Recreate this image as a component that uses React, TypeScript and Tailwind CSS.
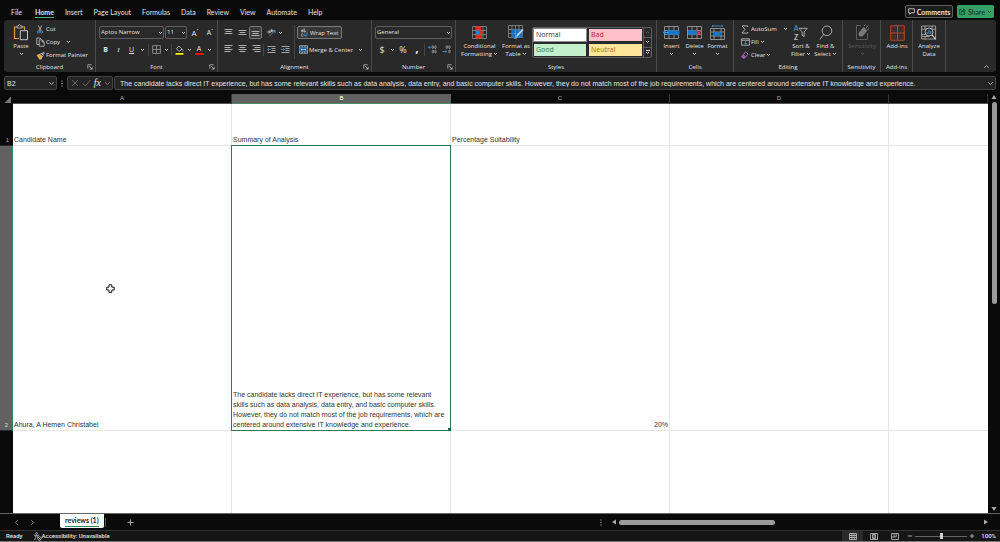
import React, { useState } from "react";

type Kids = { children?: React.ReactNode };

const SUMMARY =
  "The candidate lacks direct IT experience, but has some relevant skills such as data analysis, data entry, and basic computer skills. However, they do not match most of the job requirements, which are centered around extensive IT knowledge and experience.";

/* ---------- icons ---------- */

function Svg({ w, h, children, className = "" }: Kids & { w: number; h: number; className?: string }) {
  return (
    <svg width={w} height={h} viewBox={`0 0 ${w} ${h}`} fill="none" stroke="#c4c4c4" strokeWidth="0.8" className={`shrink-0 ${className}`} aria-hidden="true">
      {children}
    </svg>
  );
}

const Caret = () => (
  <Svg w={5} h={4}>
    <path d="M1 1l1.5 1.5L4 1" stroke="#dcdcdc" strokeWidth="0.9" />
  </Svg>
);

const Chevron = ({ dim = false }: { dim?: boolean }) => (
  <Svg w={7} h={5}>
    <path d="M1.2 1.2l2.3 2.3 2.3-2.3" stroke={dim ? "#8a8a8a" : "#c8c8c8"} />
  </Svg>
);

const PasteIcon = () => (
  <Svg w={16} h={17}>
    <path d="M6 14.5H1.5V3H4M9 3h2.5v3" stroke="#e0a243" strokeWidth="1.2" />
    <path d="M4 4V2h1.3a1.2 1.2 0 012.4 0H9v2z" />
    <path d="M7.3 6.7h7.2v9H7.3z" fill="#292929" strokeWidth="1" />
  </Svg>
);

const CutIcon = () => (
  <Svg w={8} h={9}>
    <path d="M2.3 .5l2.6 5.3M5.7 .5L3.1 5.8" />
    <circle cx="2.4" cy="7" r="1.1" stroke="#4da0dc" />
    <circle cx="5.6" cy="7" r="1.1" stroke="#4da0dc" />
  </Svg>
);

const CopyIcon = () => (
  <Svg w={9} h={10}>
    <path d="M3 7.5H.8V1H4l1 1" />
    <path d="M3.2 2.8h2.9l2 2v4.4H3.2zM6 2.8v2.1h2" />
  </Svg>
);

const PainterIcon = () => (
  <Svg w={9} h={9}>
    <path d="M1 4.2l3-1 2.3 2.4-1 2.4-1.6.4z" fill="#e3a54b" stroke="#f0c27c" strokeWidth=".6" />
    <path d="M4 3.2l1-1 2.4 2.3-1.1 1M6 3l1.4-1.8.9.7L7 3.8" stroke="#e0e0e0" />
  </Svg>
);

const Launcher = () => (
  <button type="button" aria-label="More options" className="flex w-[8px] items-center">
    <Svg w={6} h={6}>
      <path d="M.8 4.6V.8h3.8M2.3 2.3l2.8 2.8M5.1 2.7v2.4H2.7" stroke="#d0d0d0" strokeWidth="0.7" />
    </Svg>
  </button>
);

const BordersIcon = () => (
  <Svg w={9} h={9}>
    <path d="M.6.6h7.8v7.8H.6zM4.5.6v7.8M.6 4.5h7.8" stroke="#9a9a9a" />
  </Svg>
);

const FillColorIcon = () => (
  <Svg w={9} h={10}>
    <path d="M3.8 1L7 4.1 4.2 6.4 1.3 3.8zM7.4 4.3c.7.8.9 1.5.3 2" />
    <path d="M.5 8h8v1.8h-8z" fill="#fff200" stroke="none" />
  </Svg>
);

const FontColorIcon = () => (
  <span className="flex w-[9px] flex-col items-center">
    <span className="text-[7px] leading-[8px]">A</span>
    <span className="h-[2px] w-full bg-[#f00f0f]" />
  </span>
);

const Lines = ({ rows }: { rows: [number, number, number][] }) => (
  <Svg w={9} h={9}>
    {rows.map(([x, y, len]) => (
      <path key={y} d={`M${x} ${y + 0.5}h${len}`} stroke="#bdbdbd" strokeWidth="0.9" />
    ))}
  </Svg>
);

const OrientationIcon = () => (
  <Svg w={9} h={9}>
    <path d="M2.6 8L8 2.6M8 5V2.6H5.6" stroke="#4da0dc" />
    <circle cx="1.9" cy="4" r="1.1" />
    <path d="M3.1 2.5V5.2M4.3.8v3.2" />
    <circle cx="5.2" cy="3" r=".9" />
  </Svg>
);

const IndentIcon = ({ right = false }: { right?: boolean }) => (
  <Svg w={9} h={9}>
    <path d="M.5 1.5h8M4.5 3.5h4M4.5 5.5h4M.5 7.5h8" />
    <path d={right ? "M.3 4.5h3.2M2.3 3.2l1.3 1.3-1.3 1.3" : "M.5 4.5h3.2M1.8 3.2L.5 4.5l1.3 1.3"} stroke="#3f9ae0" />
  </Svg>
);

const WrapIcon = () => (
  <Svg w={8} h={10}>
    <path d="M2.9 1.4v2.8M2.900 3.4a.9.8 0 10-1.600 0 .9.8 0 001.600 0M4.200 .4v3.800M4.200 3.200c1.800-1 2 1.400 0 .9M1.400 6.200c.8-.9 1.800-.2 1.800.4M3.200 7.800c-1.600 1.200-2.600-.6-1.200-1.500" />
    <path d="M7 3.500v3.900H4.200M5.500 6L4.100 7.400l1.400 1.400" stroke="#3f9ae0" />
  </Svg>
);

const MergeIcon = () => (
  <Svg w={9} h={9}>
    <path d="M.5.8h8v7.4h-8zM3.2.8v1.7M5.9.8v1.7M3.2 6.5v1.7M5.9 6.5v1.7" />
    <path d="M.5 2.6h8v3.8h-8z" fill="#1d5c93" stroke="#3f9ae0" strokeWidth=".6" />
    <path d="M2 4.5h5M3 3.7l-1 .8 1 .8M6 3.7l1 .8-1 .8" stroke="#d9ebfa" strokeWidth=".6" />
  </Svg>
);

const DecimalIcon = ({ less = false }: { less?: boolean }) => (
  <Svg w={9} h={9}>
    <rect x="4.2" y=".7" width="1.3" height="2.8" rx=".6" strokeWidth=".6" />
    <rect x="6.8" y=".7" width="1.3" height="2.8" rx=".6" strokeWidth=".6" />
    <rect x="6.8" y="5.2" width="1.3" height="2.8" rx=".6" strokeWidth=".6" />
    {less ? (
      <path d="M.5 6.5h4.3M3.4 5.2l1.4 1.3-1.4 1.3" stroke="#3f9ae0" />
    ) : (
      <>
        <rect x="4.2" y="5.2" width="1.3" height="2.8" rx=".6" strokeWidth=".6" />
        <path d="M.5 2.3h3M1.8 1L.5 2.3l1.3 1.3" stroke="#3f9ae0" />
      </>
    )}
  </Svg>
);

const GRID_LINES = "M.5 .5h14v12H.5zM.5 4.5h14M.5 8.5h14M4 .5v12M7.5 .5v12M11 .5v12";

const ConditionalIcon = () => (
  <Svg w={15} h={13}>
    <path d={GRID_LINES} stroke="#9a9a9a" strokeWidth="0.7" />
    <path d="M4 .6h5v3.6H4zM4 8.8h6v3.6H4z" fill="#e8291c" stroke="none" />
    <path d="M4 4.8h3v3.4H4z" fill="#1e88d8" stroke="none" />
    <path d="M7 4.8h3.5v3.4H7z" fill="#e8291c" stroke="none" />
  </Svg>
);

const FormatTableIcon = () => (
  <Svg w={16} h={15}>
    <path d={GRID_LINES} stroke="#9a9a9a" strokeWidth="0.7" />
    <path d="M4.2 4.6h10.4v7.8H4.2z" fill="#1272c4" stroke="none" />
    <path d="M4 8.5h10.5M7.5 4.5v8M11 4.5v8" stroke="#5aa9e6" strokeWidth=".5" />
    <path d="M15 4.5L8.8 11" stroke="#d8d8d8" strokeWidth="1.6" />
    <path d="M8.8 10.4c-1.6 0-1.6 2.6-3.4 3.1 2 .8 4.4 0 4.4-2z" fill="#59a9e8" stroke="none" />
  </Svg>
);

const InsertIcon = () => (
  <Svg w={17} h={13}>
    <path d="M1.5 .5h14v12h-14zM1.5 4.5h14M1.5 8.5h14M6 .5v12M11 .5v12" stroke="#a5a5a5" strokeWidth="0.8" />
    <path d="M4 4.2h12.5v4.6H4z" fill="#1677ca" stroke="none" />
    <path d="M.6 6.5h5M3 4.2L.6 6.5 3 8.8" stroke="#3f9ae0" strokeWidth="1.1" />
  </Svg>
);

const DeleteIcon = () => (
  <Svg w={17} h={13}>
    <path d="M1.5 .5h14v12h-14zM1.5 4.5h14M1.5 8.5h14M6 .5v12M11 .5v12" stroke="#a5a5a5" strokeWidth="0.8" />
    <path d="M2 4.2h9v4.6H2z" fill="#1677ca" stroke="none" />
    <path d="M10.5 4.3l5 5M15.5 4.3l-5 5" stroke="#e0364a" strokeWidth="1.1" />
  </Svg>
);

const FormatIcon = () => (
  <Svg w={17} h={16}>
    <path d="M3.5 1h10M3.5 0v2M13.5 0v2" stroke="#3f9ae0" />
    <path d="M1.5 3.5h14v11h-14zM1.5 7h14M1.5 11h14M5 3.5v11M12 3.5v11" stroke="#a5a5a5" />
    <path d="M5 7h7v4H5z" fill="#1677ca" stroke="none" />
  </Svg>
);

const SumIcon = () => (
  <Svg w={8} h={9}>
    <path d="M6.8 2V.9H1l3 3.5-3 3.7h5.8V7" stroke="#d0d0d0" />
  </Svg>
);

const FillDownIcon = () => (
  <Svg w={9} h={8}>
    <path d="M.6.8h7.8v6.4H.6zM.6 2.3h7.8" />
    <path d="M4.5 3v3.2M3.2 5l1.3 1.3L5.8 5" stroke="#3f9ae0" />
  </Svg>
);

const ClearIcon = () => (
  <Svg w={8} h={8}>
    <path d="M4.6.8l2.6 2.3-3.7 4.1H2.2L.8 5.6z" stroke="#c77ad8" />
    <path d="M.9 5.5l1.8-2 2.4 2.2-1.5 1.5H2.2z" fill="#a44fb8" stroke="none" />
  </Svg>
);

const SortIcon = () => (
  <span className="flex h-[18px] items-center">
    <span className="flex flex-col font-[Lato,sans-serif] text-[7px] font-normal leading-[9px]">
      <span className="text-[#4da0dc]">A</span>
      <span>Z</span>
    </span>
    <Svg w={10} h={11}>
      <path d="M1 1.3h8.2L6.2 5v4.6L4.2 8.3V5z" stroke="#c8c8c8" />
    </Svg>
  </span>
);

const FindIcon = () => (
  <Svg w={14} h={16}>
    <circle cx="8" cy="5.8" r="4.8" stroke="#c8c8c8" />
    <path d="M4.8 9.2L.8 14.6" stroke="#c8c8c8" />
  </Svg>
);

const SensitivityIcon = () => (
  <Svg w={15} h={17}>
    <path d="M6 1.5H1.5v14h11V9" stroke="#6a6a6a" />
    <path d="M4 9l4.6-5.4 3.2 2.8L7.4 12H4.6z" fill="#777" stroke="#8a8a8a" />
    <path d="M9 2l1.3-1.4M11 4l2.4-2.7M12.6 5.8l1.5-1.4" stroke="#8a8a8a" strokeWidth="1" />
  </Svg>
);

const AddInsIcon = () => (
  <Svg w={15} h={16}>
    <path d="M.8 .8h13.4v14.4H.8zM7.5 .8v14.4M.8 8h13.4" stroke="#c24a24" strokeWidth="1" />
    <path d="M2.7 2.8h3v3.2h-3zM9.3 2.8h3v3.2h-3zM2.7 10h3v3.2h-3zM9.3 10h3v3.2h-3z" stroke="#8e351b" strokeWidth=".6" />
  </Svg>
);

const AnalyzeIcon = () => (
  <Svg w={16} h={16}>
    <path d="M.6 1h14v13H.6zM.6 4.2h14M.6 9.5h4M4 1v3M11 1v3M4 11v3M.6 11.5h8" stroke="#b5b5b5" />
    <circle cx="8" cy="7" r="4" fill="#292929" stroke="#d6d6d6" />
    <path d="M10.9 9.9l4 4.6" stroke="#d6d6d6" strokeWidth="1.1" />
    <path d="M6.2 9V7M8 9V4.8M9.8 9V6" stroke="#3f9ae0" strokeWidth="1" />
  </Svg>
);

/* ---------- ribbon parts ---------- */

const Rule = ({ tall = false }: { tall?: boolean }) => (
  <span className={`w-px shrink-0 bg-[#454545] ${tall ? "h-[34px]" : "h-[12px]"}`} />
);

function Group({ label, width, launcher = false, children }: Kids & { label: string; width: string; launcher?: boolean }) {
  return (
    <section aria-label={label || undefined} className={`flex shrink-0 flex-col border-r border-[#4a4a4a] ${width}`}>
      <div className="flex h-[42px] items-center px-[3px] pt-[2px]">{children}</div>
      <div className={`flex h-[10px] items-center ${launcher ? "pl-[8px]" : ""}`}>
        <span className="flex-1 text-center leading-[10px]">{label}</span>
        {launcher && <Launcher />}
      </div>
    </section>
  );
}

function IconButton({ label, width = "w-[14px]", on = false, children }: Kids & { label: string; width?: string; on?: boolean }) {
  return (
    <button type="button" aria-label={label} title={label} className={`flex h-[13px] shrink-0 items-center justify-center ${width} ${on ? "rounded-[2px] border border-[#7a7a7a] bg-[#3a3a3a]" : ""}`}>
      {children}
    </button>
  );
}

function SmallButton({ icon, label, caret = false }: { icon: React.ReactNode; label: string; caret?: boolean }) {
  return (
    <button type="button" className="flex h-[13px] items-center gap-px whitespace-nowrap">
      <span className="flex w-[10px] justify-center">{icon}</span>
      <span>{label}</span>
      {caret && <Caret />}
    </button>
  );
}

function BigButton({ icon, lines, width, caret = false, below = false, dim = false }: { icon: React.ReactNode; lines: string[]; width: string; caret?: boolean; below?: boolean; dim?: boolean }) {
  return (
    <button type="button" disabled={dim} className={`flex h-[38px] shrink-0 flex-col items-center whitespace-nowrap leading-[8px] ${width} ${dim ? "text-[#5c5c5c]" : ""}`}>
      <span className="flex h-[19px] items-center">{icon}</span>
      {lines.map((line, i) => (
        <span key={line} className="flex items-center gap-px">
          {line}
          {caret && i === lines.length - 1 && <Caret />}
        </span>
      ))}
      {below && (
        <span className={`flex h-[8px] items-center ${dim ? "opacity-30" : ""}`}>
          <Caret />
        </span>
      )}
    </button>
  );
}

function DropDown({ label, value, options, width }: { label: string; value: string; options: string[]; width: string }) {
  return (
    <span className={`grid shrink-0 items-center ${width}`}>
      <select aria-label={label} defaultValue={value} className="col-start-1 row-start-1 h-[13px] w-full appearance-none rounded-[2px] border border-[#5e5e5e] bg-[#292929] px-px text-[6px] leading-[11px] text-[#e2e2e2]">
        {options.map((o) => (
          <option key={o}>{o}</option>
        ))}
      </select>
      <span className="pointer-events-none col-start-1 row-start-1 mr-px justify-self-end">
        <Caret />
      </span>
    </span>
  );
}

const STYLES = [
  { name: "Normal", look: "bg-white text-[#333] outline outline-[#8a8a8a]" },
  { name: "Bad", look: "bg-[#ffc0cb] text-[#b3243c]" },
  { name: "Good", look: "bg-[#c3f0cc] text-[#2d7a38]" },
  { name: "Neutral", look: "bg-[#ffe699] text-[#a8701c]" },
];

function Ribbon() {
  return (
    <div className="mx-1 flex h-[52px] shrink-0 overflow-hidden rounded-[3px] bg-[#292929] font-['Open_Sans','Noto_Sans',sans-serif] text-[6px] font-medium">
      <Group label="Clipboard" width="w-[92px]" launcher>
        <BigButton icon={<PasteIcon />} lines={["Paste"]} width="w-[28px]" below />
        <div className="flex flex-col">
          <SmallButton icon={<CutIcon />} label="Cut" />
          <span className="flex gap-[5px]">
            <SmallButton icon={<CopyIcon />} label="Copy" />
            <IconButton label="Copy options" width="w-[6px]"><Caret /></IconButton>
          </span>
          <SmallButton icon={<PainterIcon />} label="Format Painter" />
        </div>
      </Group>

      <Group label="Font" width="w-[122px]" launcher>
        <div className="mb-[2px] flex flex-col gap-1">
          <div className="flex items-center gap-px">
            <DropDown label="Font name" value="Aptos Narrow" options={["Aptos Narrow", "Arial", "Calibri"]} width="w-[65px]" />
            <DropDown label="Font size" value="11" options={["10", "11", "12", "14"]} width="w-[22px]" />
            <IconButton label="Increase font size"><span className="text-[8px]">A</span><span className="-mt-1 text-[5px]">ˆ</span></IconButton>
            <IconButton label="Decrease font size"><span className="text-[7px]">A</span><span className="-mt-1 text-[5px]">ˇ</span></IconButton>
          </div>
          <div className="flex items-center text-[7px]">
            <IconButton label="Bold" width="w-[13px]"><b>B</b></IconButton>
            <IconButton label="Italic" width="w-[13px]"><i className="font-['Liberation_Serif',serif]">I</i></IconButton>
            <IconButton label="Underline" width="w-[13px]"><u>U</u></IconButton>
            <IconButton label="Underline options" width="w-[8px]"><Caret /></IconButton>
            <span className="ml-[2px]" />
            <Rule />
            <IconButton label="Borders"><BordersIcon /></IconButton>
            <IconButton label="Border options" width="w-[6px]"><Caret /></IconButton>
            <span className="ml-[2px]" />
            <Rule />
            <IconButton label="Fill color"><FillColorIcon /></IconButton>
            <IconButton label="Fill color options" width="w-[6px]"><Caret /></IconButton>
            <IconButton label="Font color"><FontColorIcon /></IconButton>
            <IconButton label="Font color options" width="w-[6px]"><Caret /></IconButton>
          </div>
        </div>
      </Group>

      <Group label="Alignment" width="w-[154px]" launcher>
        <div className="mb-[2px] flex w-[73px] flex-col gap-1">
          <div className="flex items-center">
            <IconButton label="Top align"><Lines rows={[[0.5, 1, 8], [1.5, 3, 6], [0.5, 5, 8]]} /></IconButton>
            <IconButton label="Middle align"><Lines rows={[[0.5, 2, 8], [1.5, 4, 6], [0.5, 6, 8]]} /></IconButton>
            <IconButton label="Bottom align" width="w-[13px]" on><Lines rows={[[0.5, 3, 8], [1.5, 5, 6], [0.5, 7, 8]]} /></IconButton>
            <span className="ml-[3px]" />
            <IconButton label="Orientation" width="w-[12px]"><OrientationIcon /></IconButton>
            <IconButton label="Orientation options" width="w-[6px]"><Caret /></IconButton>
          </div>
          <div className="flex items-center">
            <IconButton label="Align left"><Lines rows={[[0.5, 0, 8], [0.5, 2, 6], [0.5, 4, 8], [0.5, 6, 6]]} /></IconButton>
            <IconButton label="Center"><Lines rows={[[0.5, 0, 8], [1.5, 2, 6], [0.5, 4, 8], [1.5, 6, 6]]} /></IconButton>
            <IconButton label="Align right"><Lines rows={[[0.5, 0, 8], [2.5, 2, 6], [0.5, 4, 8], [2.5, 6, 6]]} /></IconButton>
            <Rule />
            <IconButton label="Decrease indent"><IndentIcon /></IconButton>
            <IconButton label="Increase indent"><IndentIcon right /></IconButton>
          </div>
        </div>
        <Rule tall />
        <div className="mb-[2px] ml-[2px] flex flex-col gap-1">
          <button type="button" aria-pressed="true" className="flex h-[13px] w-[45px] items-center gap-[2px] whitespace-nowrap rounded-[2px] border border-[#7a7a7a] bg-[#363636] px-[2px]">
            <WrapIcon />
            Wrap Text
          </button>
          <span className="flex items-center gap-1 pl-px">
            <SmallButton icon={<MergeIcon />} label="Merge & Center" />
            <IconButton label="Merge options" width="w-[6px]"><Caret /></IconButton>
          </span>
        </div>
      </Group>

      <Group label="Number" width="w-[84px]" launcher>
        <div className="mb-[2px] flex flex-col gap-1">
          <DropDown label="Number format" value="General" options={["General", "Number", "Currency", "Percentage"]} width="w-[77px]" />
          <div className="flex items-center font-normal">
            <IconButton label="Accounting format"><span className="text-[9px]">$</span></IconButton>
            <IconButton label="Accounting options" width="w-[7px]"><Caret /></IconButton>
            <IconButton label="Percent style"><span className="text-[9px]">%</span></IconButton>
            <IconButton label="Comma style"><span className="-mt-1 text-[12px] font-bold">,</span></IconButton>
            <Rule />
            <IconButton label="Increase decimal"><DecimalIcon /></IconButton>
            <IconButton label="Decrease decimal"><DecimalIcon less /></IconButton>
          </div>
        </div>
      </Group>

      <Group label="Styles" width="w-[201px]">
        <BigButton icon={<ConditionalIcon />} lines={["Conditional", "Formatting"]} width="w-[41px]" caret />
        <BigButton icon={<FormatTableIcon />} lines={["Format as", "Table"]} width="w-[32px]" caret />
        <div className="flex rounded-[2px] border border-[#5e5e5e]">
          <div className="grid grid-cols-[52px_53px] gap-[3px] p-px">
            {STYLES.map((s) => (
              <button key={s.name} type="button" className={`h-[12px] px-[2px] text-left text-[7px] font-normal leading-[12px] ${s.look}`}>
                {s.name}
              </button>
            ))}
          </div>
          <div className="flex w-[8px] flex-col divide-y divide-[#5e5e5e] border-l border-[#5e5e5e]">
            {["Previous styles", "Next styles", "All styles"].map((l, i) => (
              <button key={l} type="button" aria-label={l} className="flex flex-1 flex-col items-center justify-center">
                {i === 2 && <span className="h-px w-[4px] bg-[#dcdcdc]" />}
                <span className={i === 0 ? "rotate-180 opacity-30" : ""}><Caret /></span>
              </button>
            ))}
          </div>
        </div>
      </Group>

      <Group label="Cells" width="w-[77px]">
        <BigButton icon={<InsertIcon />} lines={["Insert"]} width="w-[23px]" below />
        <BigButton icon={<DeleteIcon />} lines={["Delete"]} width="w-[23px]" below />
        <BigButton icon={<FormatIcon />} lines={["Format"]} width="w-[23px]" below />
      </Group>

      <Group label="Editing" width="w-[109px]">
        <div className="ml-[3px] flex w-[48px] flex-col">
          <span className="flex justify-between">
            <SmallButton icon={<SumIcon />} label="AutoSum" />
            <IconButton label="AutoSum options" width="w-[6px]"><Caret /></IconButton>
          </span>
          <SmallButton icon={<FillDownIcon />} label="Fill" caret />
          <SmallButton icon={<ClearIcon />} label="Clear" caret />
        </div>
        <BigButton icon={<SortIcon />} lines={["Sort &", "Filter"]} width="w-[26px]" caret />
        <BigButton icon={<FindIcon />} lines={["Find &", "Select"]} width="w-[23px]" caret />
      </Group>

      <Group label="Sensitivity" width="w-[38px]">
        <BigButton icon={<SensitivityIcon />} lines={["Sensitivity"]} width="w-[32px]" below dim />
      </Group>
      <Group label="Add-ins" width="w-[32px]">
        <BigButton icon={<AddInsIcon />} lines={["Add-ins"]} width="w-[26px]" />
      </Group>
      <Group label="" width="w-[33px]">
        <BigButton icon={<AnalyzeIcon />} lines={["Analyze", "Data"]} width="w-[26px]" />
      </Group>
      <button type="button" aria-label="Collapse ribbon" className="mb-[3px] ml-auto mr-[6px] rotate-180 self-end">
        <Chevron />
      </button>
    </div>
  );
}

/* ---------- window parts ---------- */

const TABS = ["File", "Home", "Insert", "Page Layout", "Formulas", "Data", "Review", "View", "Automate", "Help"];

function TabBar() {
  return (
    <header className="flex h-[20px] shrink-0 items-end justify-between pl-[11px] pr-[6px] font-[Lato,sans-serif]">
      <nav className="flex items-end gap-[11px]">
        {TABS.map((t, i) => (
          <a key={t} href="#ribbon" className={`flex h-[13px] flex-col items-center leading-[10px] ${t === "Home" ? "font-bold" : ""} ${i === 1 ? "ml-[2px]" : ""}`}>
            {t}
            {t === "Home" && <span className="h-px w-full bg-[#4fb37a]" />}
          </a>
        ))}
      </nav>
      <div className="mb-[2px] flex gap-1">
        <button type="button" className="flex h-[13px] w-[48px] items-center justify-center gap-[2px] rounded-[2px] border border-[#5e5e5e] bg-[#1c1c1c] font-bold">
          <Svg w={7} h={7}>
            <path d="M.6.8h5.8v4H3.2L1.8 6.3V4.8H.6z" stroke="#e0e0e0" />
          </Svg>
          Comments
        </button>
        <button type="button" className="flex h-[13px] w-[37px] items-center justify-center gap-[2px] rounded-[2px] bg-[#35a265] text-[#0d2d1b]">
          <Svg w={7} h={7}>
            <path d="M2.5 1.5H.7v4.8h5V4.6M2.3 4.2c.2-1.4 1-2 2.4-2V1l1.8 1.8-1.8 1.8V3.4c-1 0-1.8.2-2.4.8z" stroke="#0d2d1b" strokeWidth=".7" />
          </Svg>
          Share
          <Svg w={5} h={4}>
            <path d="M1 1l1.5 1.5L4 1" stroke="#0d2d1b" />
          </Svg>
        </button>
      </div>
    </header>
  );
}

function FormulaBar() {
  return (
    <div className="mx-1 mt-1 flex h-[14px] shrink-0 items-stretch">
      <span className="grid w-[53px] items-center">
        <input aria-label="Name box" defaultValue="B2" className="col-start-1 row-start-1 h-[14px] w-full rounded-[2px] border border-[#444] bg-[#242424] px-[2px] font-['Liberation_Sans',sans-serif] text-[7px]" />
        <span className="col-start-1 row-start-1 mr-[2px] justify-self-end"><Chevron /></span>
      </span>
      <span className="flex w-[10px] items-center justify-center">
        <Svg w={2} h={7}>
          <path d="M1 .5v1M1 3v1M1 5.5v1" stroke="#ccc" strokeWidth="1" />
        </Svg>
      </span>
      <div className="flex w-[46px] items-center justify-between rounded-[2px] border border-[#444] bg-[#242424] pl-[3px] pr-px">
        <button type="button" aria-label="Cancel">
          <Svg w={8} h={8}><path d="M1 1l6 6M7 1L1 7" stroke="#777" /></Svg>
        </button>
        <button type="button" aria-label="Enter">
          <Svg w={9} h={8}><path d="M.8 4.2L3.3 7l5-6" stroke="#777" /></Svg>
        </button>
        <button type="button" aria-label="Insert function" className="font-['Liberation_Serif',serif] text-[10px] italic leading-[10px]">fx</button>
        <Chevron dim />
      </div>
      <span className="ml-px grid min-w-0 flex-1 items-center">
        <input aria-label="Formula bar" defaultValue={SUMMARY} className="col-start-1 row-start-1 h-[14px] w-full rounded-[2px] border border-[#444] bg-[#242424] pl-[5px] pr-4 font-['Liberation_Sans',sans-serif] text-[7px]" />
        <span className="col-start-1 row-start-1 mr-[2px] justify-self-end"><Chevron /></span>
      </span>
    </div>
  );
}

function Sheet() {
  const cell = "border-b border-r border-[#e6e6e6] pl-px align-bottom leading-[10px] last:border-r-0";
  const side = "border-b border-[#2a2a2a] pr-1 text-right align-bottom text-[6px] font-normal leading-[9px]";
  return (
    <table className="h-full w-full table-fixed border-separate border-spacing-0 bg-white font-['Liberation_Sans',sans-serif] text-[7px] text-[#333]">
      <colgroup>
        <col className="w-[13px]" />
        <col className="w-[219px]" />
        <col className="w-[219px]" />
        <col className="w-[219px]" />
        <col className="w-[219px]" />
        <col />
      </colgroup>
      <thead>
        <tr className="h-[10px] bg-[#0a0a0a] text-[6px] leading-[9px] text-[#b0b0b0]">
          <td className="p-0">
            <Svg w={12} h={9}><path d="M11 1.5V8H4.5z" fill="#777" stroke="none" /></Svg>
          </td>
          {["A", "B", "C", "D", ""].map((c) => (
            <th key={c} scope="col" className={`p-0 font-normal ${c === "B" ? "border-b border-[#4f8a6c] bg-[#616161] text-white" : "border-b border-r border-b-[#555] border-r-[#333]"}`}>
              {c}
            </th>
          ))}
        </tr>
      </thead>
      <tbody>
        <tr className="h-[42px]">
          <th scope="row" className={`${side} bg-[#0a0a0a] text-[#aaa]`}>1</th>
          <td className={cell}>Candidate Name</td>
          <td className={cell}>Summary of Analysis</td>
          <td className={cell}>Percentage Suitability</td>
          <td className={cell} />
          <td className={cell} />
        </tr>
        <tr className="h-[285px]">
          <th scope="row" className={`${side} border-r border-r-[#2f8a5b] bg-[#616161] text-[#ddd]`}>2</th>
          <td className={cell}>Ahura, A Hemen Christabel</td>
          <td className={`${cell} relative pr-1`}>
            {SUMMARY}
            <span className="pointer-events-none absolute -inset-px border border-[#2f7a55]" />
            <span className="absolute -bottom-px -right-px size-[3px] bg-[#1f6b45]" />
          </td>
          <td className={`${cell} pr-px text-right`}>20%</td>
          <td className={cell} />
          <td className={cell} />
        </tr>
        <tr>
          <th scope="row" className="bg-[#0a0a0a]" aria-label="3" />
          {[0, 1, 2, 3, 4].map((i) => (
            <td key={i} className="border-r border-[#e6e6e6] last:border-r-0" />
          ))}
        </tr>
      </tbody>
    </table>
  );
}

const Arrow = ({ turn = "" }: { turn?: string }) => (
  <Svg w={6} h={6} className={turn}>
    <path d="M.5 5L3 1l2.5 4z" fill="#a8a8a8" stroke="none" />
  </Svg>
);

function SheetTabs() {
  return (
    <div className="flex h-[17px] shrink-0 items-center border-t border-[#666] bg-[#0a0a0a]">
      <div className="flex w-[60px] gap-[11px] pl-[14px]">
        <button type="button" aria-label="Previous sheet"><Svg w={5} h={7}><path d="M3.8 1L1.3 3.5 3.8 6" stroke="#8c8c8c" /></Svg></button>
        <button type="button" aria-label="Next sheet"><Svg w={5} h={7}><path d="M1.2 1l2.5 2.5L1.2 6" stroke="#8c8c8c" /></Svg></button>
      </div>
      <button type="button" className="flex h-[14px] flex-col items-center self-start rounded-b-[2px] bg-white px-[5px] font-[Lato,sans-serif] text-[7px] font-bold leading-[12px] text-[#222]">
        reviews (1)
        <span className="h-px w-full bg-[#2f8a5b]" />
      </button>
      <span className="ml-px h-[9px] w-px bg-[#555]" />
      <button type="button" aria-label="New sheet" className="ml-[21px]">
        <Svg w={7} h={7}><path d="M3.5 .5v6M.5 3.5h6" stroke="#c4c4c4" /></Svg>
      </button>
      <div className="ml-auto flex w-2/5 items-center gap-[2px] pr-[11px]">
        <Svg w={2} h={7}><path d="M1 .5v1M1 3v1M1 5.5v1" stroke="#ccc" strokeWidth="1" /></Svg>
        <span className="ml-[7px] flex"><Arrow turn="-rotate-90" /></span>
        <div className="flex-1">
          <div className="h-[5px] w-[43%] rounded-full bg-[#9b9b9b]" />
        </div>
        <Arrow turn="rotate-90" />
      </div>
    </div>
  );
}

function StatusBar() {
  const [zoom, setZoom] = useState(100);
  return (
    <footer className="flex h-[12px] shrink-0 items-center border-b border-t border-b-[#777] border-t-[#333] bg-[#151515] pl-[6px] pr-1 font-[Roboto,sans-serif] text-[6px] font-medium">
      <span>Ready</span>
      <span className="ml-[10px] flex items-center">
        <Svg w={9} h={9}>
          <circle cx="3.5" cy="1.5" r=".9" />
          <path d="M.8 3l1.8.6v1.8L1.6 8M6.2 3l-1.8.6v1.6L5 6M2.6 3.6h1.8" />
          <circle cx="6.5" cy="6.5" r="1.7" />
          <path d="M5.5 5.5l2 2" />
        </Svg>
        Accessibility: Unavailable
      </span>
      <div className="ml-auto flex items-center">
        <button type="button" aria-label="Normal view" className="flex h-[10px] w-[21px] items-center justify-center bg-[#2a2a2a]">
          <Svg w={8} h={7}><path d="M.5.5h7v6h-7zM.5 2.5h7M.5 4.5h7M2.8 .5v6M5.2 .5v6" /></Svg>
        </button>
        <button type="button" aria-label="Page layout view" className="flex w-[21px] justify-center">
          <Svg w={8} h={7}><path d="M.5.5h7v6h-7zM2.5 1.5h3v4h-3zM3 2.8h2M3 4.2h2" /></Svg>
        </button>
        <button type="button" aria-label="Page break view" className="flex w-[21px] justify-center">
          <Svg w={8} h={7}><path d="M.5.5h7v6h-7zM3 .5v3.5M5.2 .5v3.5M.5 4h4.7" /></Svg>
        </button>
        <button type="button" aria-label="Zoom out" className="ml-[2px]"><Svg w={6} h={6}><path d="M.8 3h4.4" /></Svg></button>
        <input
          type="range"
          aria-label="Zoom"
          min={10}
          max={190}
          value={zoom}
          onChange={(e) => setZoom(Number(e.target.value))}
          className="mx-[2px] h-[6px] w-[52px] appearance-none bg-[linear-gradient(#666,#666)] bg-[length:100%_1px] bg-center bg-no-repeat [&::-webkit-slider-thumb]:h-[6px] [&::-webkit-slider-thumb]:w-[3px] [&::-webkit-slider-thumb]:appearance-none [&::-webkit-slider-thumb]:bg-[#d0d0d0]"
        />
        <button type="button" aria-label="Zoom in"><Svg w={6} h={6}><path d="M.8 3h4.4M3 .8v4.4" /></Svg></button>
        <span className="ml-[6px]">{zoom}%</span>
      </div>
    </footer>
  );
}

export default function App() {
  return (
    <div className="flex h-screen flex-col overflow-hidden bg-[#0a0a0a] font-['Open_Sans','Noto_Sans',sans-serif] text-[7px] leading-[10px] text-[#e2e2e2]">
      <TabBar />
      <Ribbon />
      <FormulaBar />
      <main className="relative mt-1 flex min-h-0 flex-1">
        <div className="min-w-0 flex-1">
          <Sheet />
        </div>
        <div className="flex w-[12px] shrink-0 flex-col items-center pb-px">
          <Arrow />
          <div className="min-h-0 flex-1 pt-[2px]">
            <div className="h-1/2 w-[5px] rounded-full bg-[#9b9b9b]" />
          </div>
          <Arrow turn="rotate-180" />
        </div>
        <svg className="absolute left-[106px] top-[190px]" width="9" height="9" viewBox="0 0 9 9" fill="#fff" stroke="#111" strokeWidth="1" aria-hidden="true">
          <path d="M3 .8h2.8v2.4h2.4v2.8H5.8v2.4H3V6H.7V3.2H3z" />
        </svg>
      </main>
      <SheetTabs />
      <StatusBar />
    </div>
  );
}
